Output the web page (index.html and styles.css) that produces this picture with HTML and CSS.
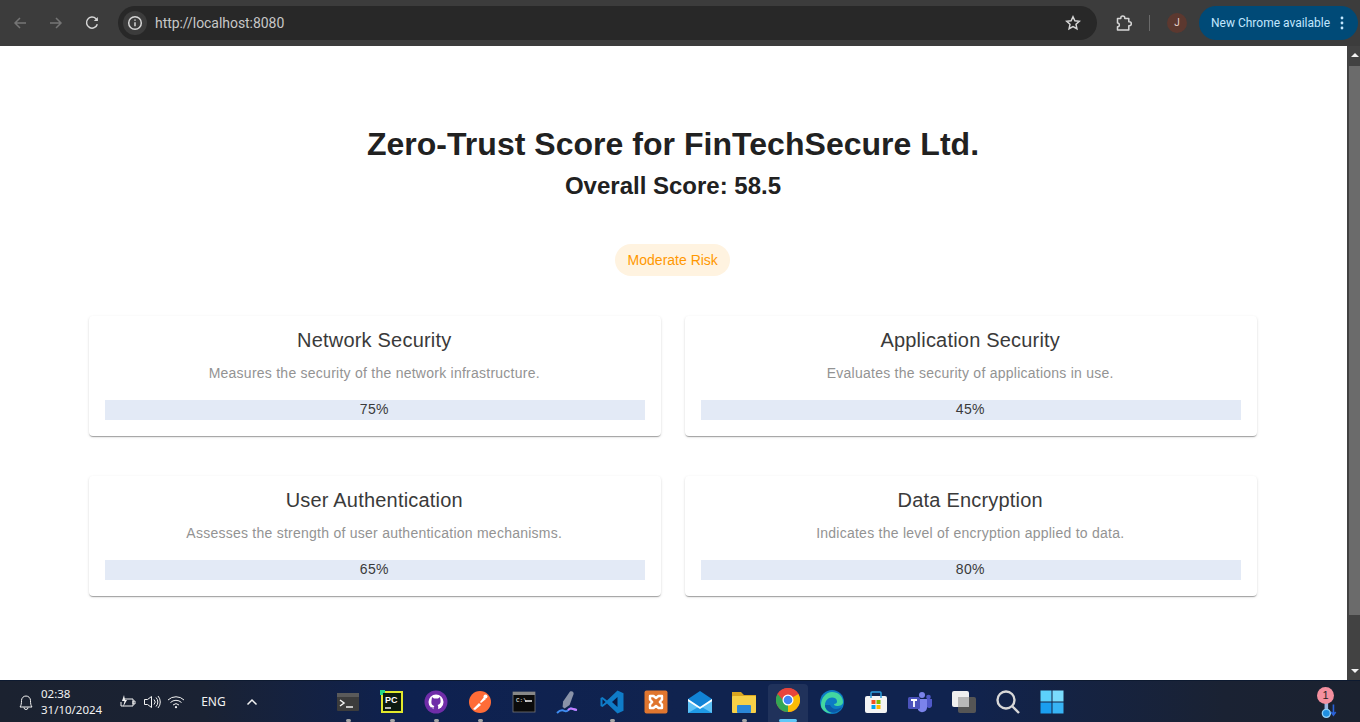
FILE: index.html
```html
<!DOCTYPE html>
<html lang="en">
<head>
<meta charset="utf-8">
<title>Zero-Trust Score</title>
<link rel="stylesheet" href="styles.css">
</head>
<body>
<header class="chrome">
  <div class="nav">
    <svg class="nav-icon" viewBox="0 0 16 16"><path d="M14 8H3M8 3 3 8l5 5" class="st dim"/></svg>
    <svg class="nav-icon" viewBox="0 0 16 16"><path d="M2 8h11M8 3l5 5-5 5" class="st dim"/></svg>
    <svg class="nav-icon" viewBox="0 0 16 16"><path d="M13.300 9.200A5.500 5.500 0 1 1 12 3.800L13.500 5.500" class="st lite"/><path d="M13.800 2v4h-4z" class="fl-lite"/></svg>
  </div>
  <div class="omnibox">
    <div class="site-info">
      <svg class="info" viewBox="0 0 16 16"><circle cx="8" cy="8" r="6.300" class="st lite"/><path d="M8 7.200v4M8 4.400v1.400" class="st lite"/></svg>
    </div>
    <span class="url">http://localhost:8080</span>
    <svg class="star" viewBox="0 0 16 16"><path d="M8 1.800l1.900 4 4.400.5-3.300 3 .9 4.400L8 11.500l-3.900 2.200.9-4.400-3.300-3 4.400-.5z" class="st lite"/></svg>
  </div>
  <svg class="ext" viewBox="0 0 18 18"><path d="M2.500 4.500h3.300V4a2 2 0 0 1 4 0v.5h4v3.300h.5a2 2 0 0 1 0 4h-.5v4.200H2.500v-3.200h.5a2 2 0 0 0 0-3.800h-.5z" class="st lite" stroke-linejoin="round"/></svg>
  <span class="divider"></span>
  <span class="avatar">J</span>
  <div class="update">
    <span class="update-text">New Chrome available</span>
    <svg class="kebab" viewBox="0 0 4 14"><circle cx="2" cy="2" r="1.400"/><circle cx="2" cy="7" r="1.400"/><circle cx="2" cy="12" r="1.400"/></svg>
  </div>
</header>

<div class="viewport">
  <main class="page">
    <h1 class="title">Zero-Trust Score for FinTechSecure Ltd.</h1>
    <h2 class="overall">Overall Score: 58.5</h2>
    <div class="chip-row"><span class="chip">Moderate Risk</span></div>
    <section class="cards">
      <article class="card">
        <h3 class="card-title">Network Security</h3>
        <p class="card-desc">Measures the security of the network infrastructure.</p>
        <div class="bar">75%</div>
      </article>
      <article class="card">
        <h3 class="card-title">Application Security</h3>
        <p class="card-desc">Evaluates the security of applications in use.</p>
        <div class="bar">45%</div>
      </article>
      <article class="card">
        <h3 class="card-title">User Authentication</h3>
        <p class="card-desc">Assesses the strength of user authentication mechanisms.</p>
        <div class="bar">65%</div>
      </article>
      <article class="card">
        <h3 class="card-title">Data Encryption</h3>
        <p class="card-desc">Indicates the level of encryption applied to data.</p>
        <div class="bar">80%</div>
      </article>
    </section>
  </main>
  <aside class="scrollbar">
    <div class="arrow-box"><span class="arrow-up"></span></div>
    <div class="thumb"></div>
    <div class="track"></div>
    <div class="arrow-box"><span class="arrow-down"></span></div>
  </aside>
</div>

<footer class="taskbar">
  <div class="tray-left">
    <svg class="bell" viewBox="0 0 18 18"><path d="M3 14c1.200-1.500 1.500-3.500 1.500-6.500a4.500 4.500 0 0 1 9 0c0 3 .3 5 1.500 6.500zM7 14.500a2 2 0 0 0 4 0" class="st white thin"/></svg>
    <div class="clock"><span>02:38</span><span>31/10/2024</span></div>
    <svg class="sys batt" viewBox="0 0 18 16"><path d="M4 5h10v7H2V8M14 7h2v3h-2z" class="st white thin"/><path d="M5 1 3 7h2.500L4 13l4-7H6z" class="fl-white"/></svg>
    <svg class="sys vol" viewBox="0 0 18 16"><path d="M1.500 5.500h3l4-3v11l-4-3h-3zM11 5.500a3.500 3.500 0 0 1 0 5M13 3.500a6.500 6.500 0 0 1 0 9M15 2a9 9 0 0 1 0 12" class="st white thin"/></svg>
    <svg class="sys wifi" viewBox="0 0 18 16"><path d="M1 6a11.500 11.500 0 0 1 16 0M3.500 8.500a8 8 0 0 1 11 0M6 11a4.400 4.400 0 0 1 6 0" class="st white thin"/><circle cx="9" cy="13.200" r="1.100" class="fl-white"/></svg>
    <span class="lang">ENG</span>
    <svg class="caret" viewBox="0 0 12 8"><path d="M1.500 6.500 6 2l4.500 4.500" class="st white"/></svg>
  </div>
  <div class="apps">
    <div class="app pinned"><svg viewBox="0 0 24 24"><rect x="1" y="3" width="22" height="18" rx="1" fill="#3c3c3c"/><rect x="1" y="3" width="22" height="4" fill="#5a5a5a"/><path d="M4 10l4 3-4 3" class="st white"/><path d="M10 17h7" class="st white"/></svg></div>
    <div class="app pinned"><svg viewBox="0 0 24 24"><rect x="1" y="1" width="22" height="22" fill="#e2e82c"/><rect x="0" y="0" width="5" height="5" fill="#21d789"/><rect x="3" y="3" width="18" height="18" fill="#0c1a10"/><text x="5" y="12.500" class="pc">PC</text><path d="M5 18h6" class="st white"/></svg></div>
    <div class="app pinned"><svg viewBox="0 0 24 24"><circle cx="12" cy="12" r="11.500" fill="#6f2da8"/><circle cx="12" cy="12" r="7.500" fill="#fff"/><path d="M8 7l2 1.500h4L16 7l.6 3.500c.4 2.500-1 4-3 4.500.5.500.6 1 .6 2v3h-4.400v-1.500c-2 .4-2.600-.5-3.300-1.800.7.200 1.300.8 2 .9.600.100 1.100 0 1.300-.1 0-.600.100-1 .6-1.500-2-.5-3.400-2-3-4.500z" fill="#6f2da8"/></svg></div>
    <div class="app pinned"><svg viewBox="0 0 24 24"><circle cx="12" cy="12" r="11" fill="#ff6c37"/><path d="M5 19l6-6 2 2-6 5zM12 12l4-5 2 2-5 4z" fill="#fff"/><circle cx="17.500" cy="6.500" r="2" fill="#fff"/></svg></div>
    <div class="app"><svg viewBox="0 0 24 24"><rect x="1" y="2" width="22" height="20" fill="#0b0b0b" stroke="#777" stroke-width=".8"/><rect x="1" y="2" width="22" height="3" fill="#888"/><text x="4" y="12" class="cmd">C:\</text><path d="M13 11h7" class="st white"/></svg></div>
    <div class="app"><svg viewBox="0 0 24 24"><path d="M14 1.500c2-1 4 .3 3.600 2.500l-4 11-5 3.500-2-1.500.5-5.500z" fill="#8a93a8"/><path d="M1 23c3-3 5-3.500 7.500-2s4-2 6-2.500 3 1 6 1.500" fill="none" stroke="#3f8cf0" stroke-width="2"/><path d="M12 20c1-.8 2-1.500 3-1.500s3 1 6 1.500" fill="none" stroke="#c77dff" stroke-width="2"/></svg></div>
    <div class="app pinned"><svg viewBox="0 0 24 24"><path d="M17.500 0.500 23.500 3.200v17.600l-6 2.700L7 13.500l-4.500 3.600L0.500 16V8l2-1.100L7 10.500z" fill="#0f7cc8"/><path d="M17.500 7l-5.500 5 5.500 5z" fill="#0a1a44"/><path d="M2.500 9.200v5.600L5.600 12z" fill="#0a1a44"/></svg></div>
    <div class="app"><svg viewBox="0 0 24 24"><rect x="0.500" y="0.500" width="23" height="23" rx="2" fill="#e0762f"/><path d="M6 6h3.500L12 8l2.500-2H18v3.500L15.800 12l2.200 2.500V18h-3.500L12 16l-2.500 2H6v-3.500L8.200 12 6 9.500z" fill="#e0762f" stroke="#fff" stroke-width="2.400" stroke-linejoin="round"/></svg></div>
    <div class="app"><svg viewBox="0 0 24 24"><path d="M0 9 12 1l12 8v14H0z" fill="#1183d6"/><path d="M0 9l12 8 12-8v14H0z" fill="#5cc0f5"/><path d="M0 23l12-7 12 7z" fill="#1f9ae6"/><path d="M0 9l12 8 12-8v2.200L12 19 0 11.200z" fill="#fff"/></svg></div>
    <div class="app pinned"><svg viewBox="0 0 24 24"><path d="M0 2h9l3 3h12v3H0z" fill="#d9a520"/><rect x="0" y="6" width="24" height="17" rx="1" fill="#f7d047"/><rect x="5" y="15" width="14" height="8" rx="1" fill="#2a86d8"/></svg></div>
    <div class="app active"><svg viewBox="0 0 24 24"><circle cx="12" cy="12" r="12" fill="#e8453c"/><path d="M12 12 1.600 6A12 12 0 0 0 12 24z" fill="#34a853"/><path d="M12 12l10.400-6H12zM12 24a12 12 0 0 0 10.400-18H12z" fill="#fbbc05"/><path d="M22.400 6A12 12 0 0 0 1.600 6L7 12h5z" fill="#e8453c"/><circle cx="12" cy="12" r="5.500" fill="#fff"/><circle cx="12" cy="12" r="4.300" fill="#4285f4"/></svg></div>
    <div class="app"><svg viewBox="0 0 24 24"><circle cx="12" cy="12" r="12" fill="#0c7bc4"/><path d="M1 15C1 8 6 2 12 2c6 0 11 4 11 10 0 3-3 4-6 4-2 0-3-1-3-2 2 0 3-1 3-2.500C17 9 15 7.500 12 7.500 8 7.500 5 11 5 15c0 4 3 7 7 8-5 1-11-3-11-8z" fill="#43d6a0"/><path d="M5 15c0 5 6 9 11 7 3-1 5-3 6-5-2 1-4 2-6 2-3 0-5-2-6-4z" fill="#0b5aa8"/></svg></div>
    <div class="app"><svg viewBox="0 0 24 24"><rect x="1" y="6" width="22" height="17" rx="2" fill="#f4f4f4"/><path d="M7 8V3a1 1 0 0 1 1-1h8a1 1 0 0 1 1 1v5" fill="none" stroke="#2a9fe0" stroke-width="1.500"/><rect x="7.500" y="10" width="4" height="4" fill="#f25022"/><rect x="12.500" y="10" width="4" height="4" fill="#7fba00"/><rect x="7.500" y="15" width="4" height="4" fill="#00a4ef"/><rect x="12.500" y="15" width="4" height="4" fill="#ffb900"/></svg></div>
    <div class="app"><svg viewBox="0 0 24 24"><circle cx="14" cy="5" r="3" fill="#7b83eb"/><circle cx="20.500" cy="7" r="2.300" fill="#5059c9"/><path d="M10 9h9v9a5 5 0 0 1-9 2z" fill="#7b83eb"/><path d="M19 9h5v7a3 3 0 0 1-5 1z" fill="#5059c9"/><rect x="0" y="7" width="12" height="12" rx="1.500" fill="#4b53bc"/><path d="M3 10h6M6 10v7" stroke="#fff" stroke-width="1.800" fill="none"/></svg></div>
    <div class="app"><svg viewBox="0 0 24 24"><rect x="0" y="1" width="17" height="16" rx="2" fill="#efefef"/><rect x="6" y="7" width="18" height="16" rx="2" fill="#555"/><rect x="6" y="7" width="11" height="10" fill="#b8b8b8"/></svg></div>
    <div class="app"><svg viewBox="0 0 24 24"><circle cx="10" cy="10" r="8.500" fill="none" stroke="#d8d8d8" stroke-width="2.400"/><path d="M16.500 16.500 23 23" stroke="#d8d8d8" stroke-width="2.400"/></svg></div>
    <div class="app"><svg viewBox="0 0 24 24"><rect x="0.500" y="0.500" width="11" height="11" fill="#5cd0fb"/><rect x="12.500" y="0.500" width="11" height="11" fill="#7adcfc"/><rect x="0.500" y="12.500" width="11" height="11" fill="#1a9ef0"/><rect x="12.500" y="12.500" width="11" height="11" fill="#38b4f5"/></svg></div>
  </div>
  <div class="notif">
    <svg class="temp" viewBox="0 0 18 22"><rect x="4" y="2" width="4" height="14" fill="#9bb4e0"/><circle cx="6" cy="17" r="4.500" fill="#1f8fe0" stroke="#8fd0f8" stroke-width="1.500"/><path d="M14 7v12M11.500 15.500 14 19l2.500-3.500" fill="none" stroke="#2a62d8" stroke-width="1.800"/></svg>
    <span class="badge">1</span>
  </div>
</footer>
</body>
</html>
```
FILE: styles.css
```css
* { box-sizing: border-box; }
html, body { margin: 0; height: 722px; overflow: hidden; }
body { display: flex; flex-direction: column; font-family: "Liberation Sans", Arial, sans-serif; background: #fff; }
svg { display: block; }
.st { fill: none; stroke-width: 1.500; }
.dim { stroke: #757575; }
.lite { stroke: #d6d6d6; }
.white { stroke: #f2f2f2; }
.thin { stroke-width: 1; }
.fl-lite { fill: #d6d6d6; }
.fl-white { fill: #f2f2f2; }

.chrome { height: 46px; flex: none; display: flex; align-items: center; background: #3c3c3c; padding-left: 12px; }
.nav { display: flex; gap: 20px; width: 106px; }
.nav-icon { width: 16px; height: 16px; }
.omnibox { width: 979px; height: 34px; border-radius: 17px; background: #282828; display: flex; align-items: center; padding: 0 16px 0 5px; }
.site-info { width: 24px; height: 24px; border-radius: 50%; background: #3c3c3c; display: flex; align-items: center; justify-content: center; }
.info { width: 16px; height: 16px; }
.url { margin-left: 8px; flex: 1; font: 14px "Roboto", "Liberation Sans", sans-serif; letter-spacing: -0.05px; color: #c7c7c7; }
.star { width: 16px; height: 16px; }
.ext { width: 18px; height: 18px; margin-left: 18px; }
.divider { width: 1px; height: 16px; background: #6a6a6a; margin-left: 16px; }
.avatar { width: 20px; height: 20px; border-radius: 50%; background: #5c382f; color: #e8d5cf; font: 10px/20px "Roboto", sans-serif; text-align: center; margin-left: 17px; }
.update { width: 159px; height: 34px; margin-left: 12px; border-radius: 17px; background: #004a77; display: flex; align-items: center; padding-left: 12px; }
.update-text { font: 12px "Roboto", "Liberation Sans", sans-serif; color: #c2e7ff; white-space: nowrap; }
.kebab { width: 4px; height: 14px; margin-left: 10px; fill: #c2e7ff; }

.viewport { flex: 1; min-height: 0; display: flex; }
.page { flex: 1; min-width: 0; padding: 64px 90px 0 89px; display: flex; flex-direction: column; }
.title { margin: 0; padding-top: 15px; font-size: 32px; line-height: 38px; font-weight: 700; letter-spacing: 0.03px; color: #212121; text-align: center; }
.overall { margin: 9px 0 0; font-size: 24px; line-height: 28px; font-weight: 700; color: #212121; text-align: center; }
.chip-row { display: flex; justify-content: center; margin-top: 44px; }
.chip { height: 32px; padding: 0 12px 0 12.500px; margin-left: -1px; border-radius: 16px; background: #fff3e0; color: #ff9800; font-size: 14px; line-height: 32px; }
.cards { margin-top: 40px; display: grid; grid-template-columns: 572px 572px; column-gap: 24px; row-gap: 40px; }
.card { height: 120px; border-radius: 4px; padding: 12px 16px 0; box-shadow: 0 2px 1px -1px rgba(0,0,0,.2), 0 1px 1px 0 rgba(0,0,0,.14), 0 1px 3px 0 rgba(0,0,0,.12); text-align: center; background: #fff; }
.card-title { margin: 0; font-size: 20px; line-height: 24px; font-weight: 400; letter-spacing: 0.2px; text-indent: -1.500px; color: #3a3a3a; }
.card-desc { margin: 11px 0 0; font-size: 14px; line-height: 20px; letter-spacing: 0.25px; text-indent: -1.500px; color: #939393; }
.bar { margin-top: 17px; height: 20px; background: #e3eaf6; font-size: 14px; line-height: 18px; letter-spacing: 0.25px; text-indent: -1.500px; color: #3a3a3a; }

.scrollbar { width: 13px; flex: none; background: #424242; display: flex; flex-direction: column; align-items: stretch; }
.arrow-box { height: 18px; flex: none; display: flex; align-items: center; justify-content: center; padding-left: 2px; }
.arrow-up { border: 4px solid transparent; border-top: 0; border-bottom: 4px solid #f2f2f2; }
.arrow-down { border: 4px solid transparent; border-bottom: 0; border-top: 4px solid #f2f2f2; }
.thumb { height: 549px; margin: 2px 0 0 2px; background: #6b6b6b; }
.track { flex: 1; }

.taskbar { height: 42px; flex: none; display: flex; align-items: center; background: linear-gradient(90deg, #1b2230 0%, #1a2233 15%, #0e2150 30%, #10234f 50%, #10234f 70%, #1a2233 90%, #1b2230 100%); border-top: 1px solid #0d1a30; position: relative; }
.tray-left { display: flex; align-items: center; width: 326px; padding-left: 17px; }
.bell { width: 18px; height: 18px; }
.clock { margin-left: 6px; display: flex; flex-direction: column; font: 11.500px/16px "Noto Sans", "Liberation Sans", sans-serif; color: #f2f2f2; }
.sys { width: 18px; height: 16px; }
.batt { margin-left: 17px; }
.vol { margin-left: 6px; }
.wifi { margin-left: 6px; }
.lang { margin-left: 16px; font: 12px "Noto Sans", "Liberation Sans", sans-serif; color: #f2f2f2; }
.caret { width: 12px; height: 8px; margin-left: 20px; }
.apps { display: flex; height: 41px; }
.app { width: 44px; display: flex; align-items: center; justify-content: center; position: relative; }
.app svg { width: 24px; height: 24px; }
.app.pinned::after { content: ""; position: absolute; bottom: 0; left: 20px; width: 5px; height: 3px; border-radius: 2px; background: #a5a5a5; }
.app.active { width: 40px; margin: 3px 2px 0; padding-bottom: 6px; background: rgba(255,255,255,.07); border-radius: 4px 4px 0 0; }
.app.active::after { content: ""; position: absolute; bottom: 0; left: 11px; width: 18px; height: 3px; border-radius: 2px; background: #60c8f8; }
.pc { font: 700 9px "Liberation Sans", sans-serif; fill: #fff; }
.cmd { font: 6px "Liberation Mono", monospace; fill: #fff; }
.notif { position: absolute; left: 1317px; top: 6px; width: 26px; height: 34px; }
.temp { position: absolute; left: 4px; top: 11px; width: 16px; height: 20px; }
.badge { position: absolute; left: 0; top: 0; width: 17px; height: 17px; border-radius: 50%; background: #f4909f; color: #222; font: 11px/17px "Liberation Sans", sans-serif; text-align: center; }
```
